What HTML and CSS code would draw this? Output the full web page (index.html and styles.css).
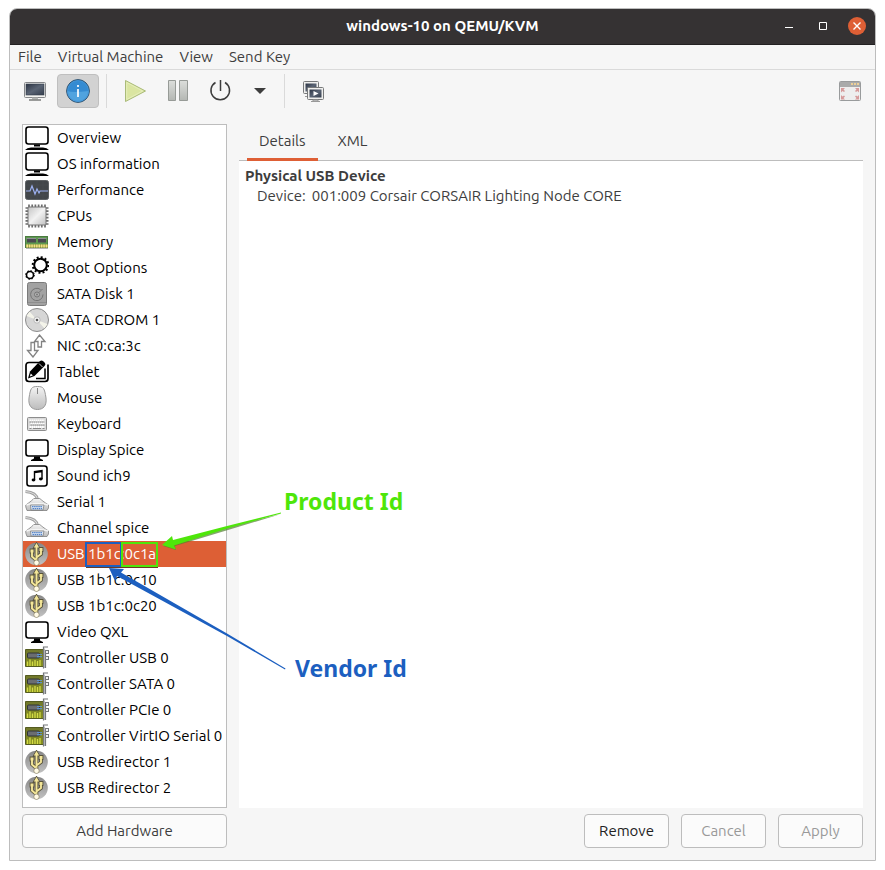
FILE: index.html
```html
<!DOCTYPE html>
<html lang="en">
<head>
<meta charset="utf-8">
<title>windows-10 on QEMU/KVM</title>
<link rel="stylesheet" href="styles.css">
</head>
<body>
<svg class="defs" aria-hidden="true">
  <defs>
    <linearGradient id="screen" x1="0" y1="0" x2="1" y2="1"><stop offset="0" stop-color="#2c3444"/><stop offset=".5" stop-color="#5a6474"/><stop offset="1" stop-color="#353e4e"/></linearGradient>
    <linearGradient id="silver" x1="0" y1="0" x2="1" y2="1"><stop offset="0" stop-color="#c4c4c4"/><stop offset=".5" stop-color="#f2f2f2"/><stop offset="1" stop-color="#c0c0c0"/></linearGradient>
    <linearGradient id="ball" x1="0" y1="0" x2="0" y2="1"><stop offset="0" stop-color="#868686"/><stop offset="1" stop-color="#c2c2c2"/></linearGradient>
    <linearGradient id="pale" x1="0" y1="0" x2="0" y2="1"><stop offset="0" stop-color="#f4f4f4"/><stop offset="1" stop-color="#bcbcbc"/></linearGradient>
    <linearGradient id="bar" x1="0" y1="0" x2="0" y2="1"><stop offset="0" stop-color="#dcdedb"/><stop offset="1" stop-color="#b4b7b3"/></linearGradient>
    <linearGradient id="board" x1="0" y1="0" x2="0" y2="1"><stop offset="0" stop-color="#70772c"/><stop offset="1" stop-color="#88901f"/></linearGradient>
  </defs>
  <symbol id="computer" viewBox="0 0 24 24">
    <path d="M3.500 1h17q2.500 0 2.500 2.500v12q0 2.500-2.500 2.500h-17q-2.500 0-2.500-2.500v-12q0-2.500 2.500-2.500z" fill="#fff" stroke="#000" stroke-width="1.600"/>
    <path d="M9 18.500h6v2h-6zM0 24q2-2.500 6-2.500h12q4 0 6 2.500z"/>
  </symbol>
  <symbol id="display" viewBox="0 0 24 24">
    <rect x="1" y="2" width="22" height="16" rx="2.500" fill="#fff" stroke="#000" stroke-width="1.600"/>
    <path d="M9 18.500h6v2l3 1.500v1h-12v-1l3-1.500z"/>
  </symbol>
  <symbol id="performance" viewBox="0 0 24 24">
    <rect x=".5" y="2.500" width="23" height="19" rx="2" fill="#42464a" stroke="#5d6164"/>
    <path d="M1 7h22M1 12h22M1 17h22M6 3v18M12 3v18M18 3v18" stroke="#4a4f53" stroke-width=".6"/>
    <path d="M1 13h4l2-5 3 8 2-5 2 4 1-2h8" fill="none" stroke="#9cb0f0" stroke-width="1.200"/>
  </symbol>
  <symbol id="cpu" viewBox="0 0 24 24">
    <path d="M4 .5v23M7.200 .5v23M10.400 .5v23M13.600 .5v23M16.800 .5v23M20 .5v23M.5 4h23M.5 7.200h23M.5 10.400h23M.5 13.600h23M.5 16.800h23M.5 20h23" stroke="#6c6c6c" stroke-width="1.700"/>
    <rect x="3" y="3" width="18" height="18" rx="1" fill="url(#silver)" stroke="#777"/>
  </symbol>
  <symbol id="memory" viewBox="0 0 24 24">
    <rect x=".5" y="6.500" width="22" height="11" fill="#5e9a50" stroke="#4b7a41"/>
    <path d="M2 8.500h9v4h-9zM13 8.500h8v4h-8z" fill="#4a4a50"/>
    <path d="M1.500 8.500h9.500M13 8.500h8.500" stroke="#8f8f95"/>
    <path d="M1 16h22" stroke="#a9a447" stroke-width="3"/>
    <path d="M1.500 16h21" stroke="#f2e488" stroke-width="3" stroke-dasharray="1.500 .9"/>
    <path d="M1 18.500h22" stroke="#b7b7b7"/>
  </symbol>
  <symbol id="gears" viewBox="0 0 24 24">
    <circle cx="15.500" cy="9" r="6.300" fill="#fff" stroke="#000" stroke-width="2"/>
    <circle cx="15.500" cy="9" r="7.800" fill="none" stroke="#000" stroke-width="2" stroke-dasharray="2 2.080"/>
    <circle cx="5" cy="19" r="3.500" fill="#fff" stroke="#000" stroke-width="1.600"/>
    <circle cx="5" cy="19" r="4.400" fill="none" stroke="#000" stroke-width="1" stroke-dasharray="1.500 1.960"/>
  </symbol>
  <symbol id="disk" viewBox="0 0 24 24">
    <rect x="2.500" y=".5" width="19" height="23" rx="2" fill="#a2a2a2" stroke="#7b7b7b"/>
    <path d="M3 20.500h18" stroke="#8e8e8e"/>
    <path d="M15.500 7.500a6.200 6.200 0 1 0 2.500 5" fill="none" stroke="#757575"/>
    <circle cx="12" cy="12.500" r="2.500" fill="#b3b3b3" stroke="#757575"/>
    <path d="M14 10.500l3.500-3.500" stroke="#757575"/>
    <circle cx="12" cy="12.500" r="1" fill="#777"/>
  </symbol>
  <symbol id="cdrom" viewBox="0 0 24 24">
    <circle cx="12" cy="12" r="11.500" fill="#d6d6d6" stroke="#8c8c8c"/>
    <path d="M12 12L1.500 8l3-4.500zM12 12l10.500 4-3 4.500z" fill="#f4f4ea"/>
    <circle cx="12" cy="12" r="3.200" fill="#f5f5f5" stroke="#bababa"/>
    <circle cx="12" cy="12" r="1.300" fill="#555"/>
  </symbol>
  <symbol id="network" viewBox="0 0 24 24">
    <path d="M14.500 1l5.500 6.500h-3.500v5.500h-3.500v-5.500h-3.500zM8 23l-5.500-6.500h3.500v-8h3.500v8h3.500z" fill="#fff" stroke="#828282" stroke-width="1.300"/>
  </symbol>
  <symbol id="tablet" viewBox="0 0 24 24">
    <path d="M15 2.500h-11q-3 0-3 3v13q0 3 3 3h16q3 0 3-3v-14" fill="none" stroke="#000" stroke-width="1.700"/>
    <path d="M3 18.500l2-7 10-10.500q1.500-1 3 0l2 2q1 1.500-.5 3l-10 10z"/>
    <path d="M11 18.500h9v-10" fill="none" stroke="#000" stroke-width="1.500"/>
    <path d="M4.800 16.500l1-3 2 2z" fill="#fff"/>
    <path d="M14 3.500l3.500 3.500" stroke="#fff" stroke-width=".8"/>
  </symbol>
  <symbol id="mouse" viewBox="0 0 24 24">
    <path d="M12.500 .5c6 0 7 1.500 8.500 11.500 1 8-3 11.500-8.500 11.500s-9.500-3.500-8.500-11.500c1.500-10 2.500-11.500 8.500-11.500z" fill="url(#pale)" stroke="#999"/>
    <path d="M12.500 2v6" stroke="#888"/>
  </symbol>
  <symbol id="keyboard" viewBox="0 0 24 24">
    <rect x="2.500" y="5.500" width="19" height="13" rx="1" fill="#d9d9d9" stroke="#8d8d8d"/>
    <path d="M4.500 8.500h15M5.500 11.500h14M4.500 15h15" stroke="#fff" stroke-width="2" stroke-dasharray="1.600 .5"/>
    <path d="M4.500 10h15M5.500 13h14" stroke="#888" stroke-width="1" stroke-dasharray="1.600 .5"/>
    <path d="M4.500 16.500h2M8 16.500h8M17.500 16.500h2" stroke="#888"/>
  </symbol>
  <symbol id="sound" viewBox="0 0 24 24">
    <rect x="2" y="2" width="20" height="20" rx="2.500" fill="#fff" stroke="#000" stroke-width="1.600"/>
    <path d="M9.500 16v-8.500l7.500-1v8.500M9.500 8.500l7.500-1" fill="none" stroke="#000" stroke-width="1.400"/>
    <ellipse cx="8.500" cy="16" rx="1.900" ry="1.400"/><ellipse cx="15.800" cy="15" rx="1.900" ry="1.400"/>
  </symbol>
  <symbol id="serial" viewBox="0 0 24 24">
    <path d="M.5 1.500q11 1 12 8" fill="none" stroke="#a0a0a0" stroke-width="2.800"/>
    <path d="M.5 1.500q11 1 12 8" fill="none" stroke="#e0e0e0" stroke-width="1.200"/>
    <path d="M.8 17v-2q7-5 8-6.500h6q2 2 8.700 6.500v3l-1.500 2.500h-20z" fill="url(#pale)" stroke="#808080" stroke-width=".8"/>
    <path d="M1.500 15q3-1.500 10.500-1.500t11 1.500" fill="none" stroke="#f5f5f5" stroke-width="1.500"/>
    <path d="M5.500 15h13.500l-1 5h-12z" fill="#dce6f4" stroke="#777" stroke-width=".7"/>
    <path d="M7 16.700h10.500M7.500 18.700h9.500" stroke="#5685c8" stroke-width="1.300" stroke-dasharray="1.500 .6"/>
  </symbol>
  <symbol id="usb" viewBox="0 0 24 24">
    <circle cx="11.500" cy="12" r="11.300" fill="url(#ball)"/>
    <g fill="none" stroke="#57523a" stroke-width="3.600"><path d="M11.500 3v17M11.500 18.500l-4.500-4v-5M11.500 15.500l4.500-3.500v-4"/></g>
    <path d="M7.500 6.500l4-7 4 7zM4.600 6.600h4.800v4.800h-4.800zM13.600 5.100h4.800v4.800h-4.800z" fill="#57523a"/>
    <g fill="none" stroke="#f3e699" stroke-width="1.900"><path d="M11.500 4v16M11.500 18.500l-4.500-4v-5M11.500 15.500l4.500-3.500v-4"/></g>
    <path d="M8.800 5.500l2.700-4.500 2.700 4.500zM5.500 7.500h3v3h-3zM14.500 6h3v3h-3z" fill="#f3e699"/>
    <circle cx="11.500" cy="20.800" r="2.700" fill="#fffae6" stroke="#776f50" stroke-width=".6"/>
  </symbol>
  <symbol id="card" viewBox="0 0 24 24">
    <path d="M.5 3.500h18v17h-18z" fill="url(#board)" stroke="#555c20"/>
    <rect x="2.500" y="7" width="12" height="5" rx="1" fill="#6a6d71" stroke="#303438"/>
    <path d="M12 8.500h5M12 10.700h5" stroke="#5e92cc" stroke-width="1.200"/>
    <path d="M2.500 15.500v4.500M5 13.500v6.500M7.500 15.500v4.500M10 14v6M12.500 15v5M15 14v6" stroke="#d3dc45" stroke-width="1.300"/>
    <path d="M18.500 22.500v-21.500h4.500M20.500 22v-18M20.500 4.500h3v3h-3M20.500 10.500h3v3h-3" fill="none" stroke="#727577" stroke-width="1.200"/>
    <path d="M19.500 22v-19.500" stroke="#b3b5b6" stroke-width="1.200"/>
  </symbol>
</svg>

<main class="window">
  <header class="titlebar">
    <h1 class="title">windows-10 on QEMU/KVM</h1>
    <div class="window-controls">
      <button class="control" aria-label="Minimize"><svg viewBox="0 0 18 18"><path d="M5 10.500h8" stroke="#fff"/></svg></button>
      <button class="control" aria-label="Maximize"><svg viewBox="0 0 18 18"><path d="M5.500 5.500h7v7h-7z" fill="none" stroke="#fff"/></svg></button>
      <button class="control close" aria-label="Close"><svg viewBox="0 0 18 18"><path d="M5.500 5.500l7 7M12.500 5.500l-7 7" stroke="#fff" stroke-width="1.400"/></svg></button>
    </div>
  </header>

  <nav class="menubar" aria-label="Menu">
    <button>File</button><button>Virtual Machine</button><button>View</button><button>Send Key</button>
  </nav>

  <div class="toolbar">
    <button class="tool" aria-label="Console">
      <svg viewBox="0 0 24 24"><rect x="1.500" y="3.500" width="21" height="15" rx="1" fill="#f3f3f0" stroke="#85878a"/><rect x="3" y="5" width="18" height="11" fill="url(#screen)" stroke="#333d4c" stroke-width=".6"/><path d="M9 18.500h6v2h-6z" fill="#b2b4b2"/><path d="M6 21h12" stroke="#7b7d7b" stroke-width="1.500"/></svg>
    </button>
    <button class="tool pressed" aria-label="Hardware details" aria-pressed="true">
      <svg viewBox="0 0 24 24"><circle cx="12" cy="12" r="11.400" fill="#348bd2" stroke="#34536d" stroke-width="1"/><path d="M1.300 12q5 2 21.400 0a10.700 10.700 0 0 1-21.400 0z" fill="#50a3df"/><circle cx="12" cy="12" r="10.400" fill="none" stroke="#4596d6" stroke-width=".8"/><path d="M12 6v2M12 10v8" stroke="#fff" stroke-width="1.700"/></svg>
    </button>
    <span class="separator"></span>
    <button class="tool" aria-label="Run"><svg viewBox="0 0 24 24"><path d="M2.500 1.500l20 10.500-20 10.500z" fill="#dae5a1" stroke="#aabb79"/><path d="M3.700 3.500l16 8.500-16 8.500z" fill="none" stroke="#e6eebb"/></svg></button>
    <button class="tool" aria-label="Pause"><svg viewBox="0 0 24 24"><path d="M2.500 1.500h7v20h-7zM13.500 1.500h8v20h-8z" fill="url(#bar)" stroke="#979b97"/></svg></button>
    <button class="tool" aria-label="Shut down"><svg viewBox="0 0 24 24"><path d="M6.500 3.500a9.300 9.300 0 1 0 9.500 0M11.500 1v11" fill="none" stroke="#3d3d3d" stroke-width="1.500"/></svg></button>
    <button class="tool narrow" aria-label="Shut down options"><svg viewBox="0 0 24 24"><path d="M6 9h12l-6 6z" fill="#3d3d3d"/></svg></button>
    <span class="separator"></span>
    <button class="tool" aria-label="Snapshots">
      <svg viewBox="0 0 24 24"><rect x="2.500" y="2.500" width="15" height="12" rx="1" fill="#efefed" stroke="#77797a"/><rect x="4.500" y="4.500" width="11" height="8" fill="url(#screen)"/><path d="M4 17.500h4" stroke="#999"/><rect x="6.500" y="8.500" width="16" height="12" rx="1" fill="#efefed" stroke="#77797a"/><rect x="8.500" y="10.500" width="12" height="8" fill="url(#screen)"/><path d="M12.500 12l5 2.500-5 2.500z" fill="#fff"/><path d="M12 21h5v1.500h-5zM10 22.500h9" stroke="#999" fill="#ccc"/></svg>
    </button>
    <span class="spacer"></span>
    <button class="tool" aria-label="Fullscreen">
      <svg viewBox="0 0 24 24"><rect x="1.500" y="2.500" width="21" height="19" rx="1" fill="#eee" stroke="#999b9c"/><path d="M2 3h20v5h-20z" fill="#a9aaaa"/><path d="M13 5h2M16 5h2M19 5h2" stroke="#edcf96" stroke-width="2"/><path d="M3 9h4l-1.500 1.500 1.500 1.500-1 1-1.500-1-1.500 1.500zM21 9h-4l1.500 1.500-1.500 1.500 1 1 1.500-1 1.500 1.500zM3 20.500h4l-1.500-1.500 1.500-1.500-1-1-1.500 1-1.500-1.500zM21 20.500h-4l1.500-1.500-1.500-1.500 1-1 1.500 1 1.500-1.500z" fill="#d69a9a"/></svg>
    </button>
  </div>

  <div class="workspace">
    <ul class="hardware">
      <li><button><svg><use href="#computer"/></svg>Overview</button></li>
      <li><button><svg><use href="#computer"/></svg>OS information</button></li>
      <li><button><svg><use href="#performance"/></svg>Performance</button></li>
      <li><button><svg><use href="#cpu"/></svg>CPUs</button></li>
      <li><button><svg><use href="#memory"/></svg>Memory</button></li>
      <li><button><svg><use href="#gears"/></svg>Boot Options</button></li>
      <li><button><svg><use href="#disk"/></svg>SATA Disk 1</button></li>
      <li><button><svg><use href="#cdrom"/></svg>SATA CDROM 1</button></li>
      <li><button><svg><use href="#network"/></svg>NIC :c0:ca:3c</button></li>
      <li><button><svg><use href="#tablet"/></svg>Tablet</button></li>
      <li><button><svg><use href="#mouse"/></svg>Mouse</button></li>
      <li><button><svg><use href="#keyboard"/></svg>Keyboard</button></li>
      <li><button><svg><use href="#display"/></svg>Display Spice</button></li>
      <li><button><svg><use href="#sound"/></svg>Sound ich9</button></li>
      <li><button><svg><use href="#serial"/></svg>Serial 1</button></li>
      <li><button><svg><use href="#serial"/></svg>Channel spice</button></li>
      <li><button class="selected" aria-current="true"><svg><use href="#usb"/></svg>USB 1b1c:0c1a</button></li>
      <li><button><svg><use href="#usb"/></svg>USB 1b1c:0c10</button></li>
      <li><button><svg><use href="#usb"/></svg>USB 1b1c:0c20</button></li>
      <li><button><svg><use href="#display"/></svg>Video QXL</button></li>
      <li><button><svg><use href="#card"/></svg>Controller USB 0</button></li>
      <li><button><svg><use href="#card"/></svg>Controller SATA 0</button></li>
      <li><button><svg><use href="#card"/></svg>Controller PCIe 0</button></li>
      <li><button><svg><use href="#card"/></svg>Controller VirtIO Serial 0</button></li>
      <li><button><svg><use href="#usb"/></svg>USB Redirector 1</button></li>
      <li><button><svg><use href="#usb"/></svg>USB Redirector 2</button></li>
    </ul>

    <section class="details">
      <div class="tabs" role="tablist">
        <button class="tab active" role="tab" aria-selected="true">Details</button>
        <button class="tab" role="tab" aria-selected="false">XML</button>
      </div>
      <div class="panel" role="tabpanel">
        <h2>Physical USB Device</h2>
        <dl><dt>Device:</dt><dd>001:009 Corsair CORSAIR Lighting Node CORE</dd></dl>
      </div>
    </section>

    <button class="action">Add Hardware</button>
    <div class="actions">
      <button class="action strong">Remove</button>
      <button class="action" disabled>Cancel</button>
      <button class="action" disabled>Apply</button>
    </div>

    <svg class="callouts" viewBox="0 0 400 560" aria-hidden="true">
      <g fill="none" stroke-width="2">
        <path d="M64 443.500h72" stroke="#6b3a25" stroke-width="1"/>
        <path d="M64 419h35v23h-35z" stroke="#1c5fc0"/>
        <path d="M100 419h35v23h-35z" stroke="#4ee60a"/>
      </g>
      <path d="M141 422l13 4-1-4 53-16 53-16-54 13z" fill="#51802f" opacity=".7"/>
      <path d="M140 421l10-9 1 4 54-14 54-13.500v1l-54 15-53 17 2 4z" fill="#4ee60a"/>
      <path d="M87 444l15 1-3 3.500 106 61 58.500 35-.5 1-58-33.500-110-60-2 5z" fill="#1c5fc0"/>
    </svg>
    <p class="label product">Product Id</p>
    <p class="label vendor">Vendor Id</p>
  </div>
</main>
</body>
</html>
```
FILE: styles.css
```css
* { box-sizing: border-box; }

body {
  display: flex;
  min-height: 100vh;
  margin: 0;
  padding: 8px 9px 9px;
  background: #fff;
  color: #3d3d3d;
  font: 15px/20px "Ubuntu", "Noto Sans", sans-serif;
}

button {
  margin: 0;
  padding: 0;
  border: 0;
  background: none;
  color: inherit;
  font: inherit;
}

h1, h2, p, ul, dl, dd { margin: 0; padding: 0; }

.defs { position: absolute; width: 0; height: 0; }

.window {
  display: flex;
  flex: 1;
  flex-direction: column;
  min-width: 0;
  border: 1px solid #bdbdbd;
  border-radius: 8px 8px 0 0;
  background: #f6f6f6;
}

.titlebar {
  display: grid;
  grid-template-columns: 1fr auto 1fr;
  align-items: center;
  height: 36px;
  padding: 0 9px 1px;
  border-bottom: 1px solid #232122;
  border-radius: 7px 7px 0 0;
  background: #353233;
  color: #fff;
}

.title {
  grid-column: 2;
  font-size: 15px;
  line-height: 20px;
  font-weight: 600;
}

.window-controls {
  display: flex;
  justify-content: flex-end;
  gap: 16px;
}

.control {
  width: 18px;
  height: 18px;
  border-radius: 50%;
}

.control svg { display: block; }
.close { background: #de5f35; }

.menubar {
  display: flex;
  gap: 16px;
  height: 25px;
  padding: 0 8px;
  border-bottom: 1px solid #dadada;
}

.toolbar {
  display: flex;
  gap: 1px;
  padding: 4px;
}

.tool {
  display: grid;
  place-items: center;
  width: 42px;
  height: 34px;
  border: 1px solid transparent;
  border-radius: 4px;
}

.tool svg { width: 24px; height: 24px; }
.tool.narrow { width: 34px; }

.tool.pressed {
  border-color: #bfbfbf;
  background: #d2d2d2;
}

.separator {
  width: 1px;
  margin: 0 6px;
  background: #dadada;
}

.spacer { flex: 1; }

.workspace {
  position: relative;
  display: grid;
  flex: 1;
  grid-template-columns: 205px 1fr;
  grid-template-rows: 1fr auto;
  gap: 6px 12px;
  margin: 12px;
}

.hardware {
  border: 1px solid #bdbdbd;
  background: #fff;
  color: #000;
  list-style: none;
}

.hardware button {
  display: flex;
  align-items: center;
  gap: 8px;
  width: 100%;
  height: 26px;
  padding: 0 2px;
  text-align: left;
  white-space: nowrap;
}

.hardware svg { flex: none; width: 24px; height: 24px; }

.hardware .selected {
  background: #dd5f35;
  color: #fff;
}

.details {
  display: flex;
  flex-direction: column;
}

.tabs {
  display: flex;
  gap: 8px;
  height: 37px;
  padding: 0 8px;
  border-bottom: 1px solid #bdbdbd;
}

.tab {
  height: 37px;
  padding: 0 12px;
  border-bottom: 3px solid transparent;
}

.tab.active { border-bottom-color: #de5f35; }

.panel {
  flex: 1;
  padding: 5px 6px;
  background: #fff;
}

.panel h2 { font-size: 15px; line-height: 20px; font-weight: 700; }

.panel dl {
  display: flex;
  gap: 6px;
  padding-left: 12px;
}

.actions {
  display: flex;
  justify-content: flex-end;
  gap: 12px;
}

.action {
  min-width: 85px;
  height: 34px;
  border: 1px solid #bdbdbd;
  border-radius: 4px;
  background: #fbfbfb;
}

.action.strong { color: #222; }
.action:disabled { color: #999; }

.callouts {
  position: absolute;
  top: 0;
  left: 0;
  width: 400px;
  height: 560px;
  pointer-events: none;
}

.label {
  position: absolute;
  font: 700 23px/30px "Noto Sans", sans-serif;
}

.product {
  top: 362px;
  left: 262px;
  color: #4ee60a;
}

.vendor {
  top: 529px;
  left: 273px;
  color: #1c5fc0;
}
```
